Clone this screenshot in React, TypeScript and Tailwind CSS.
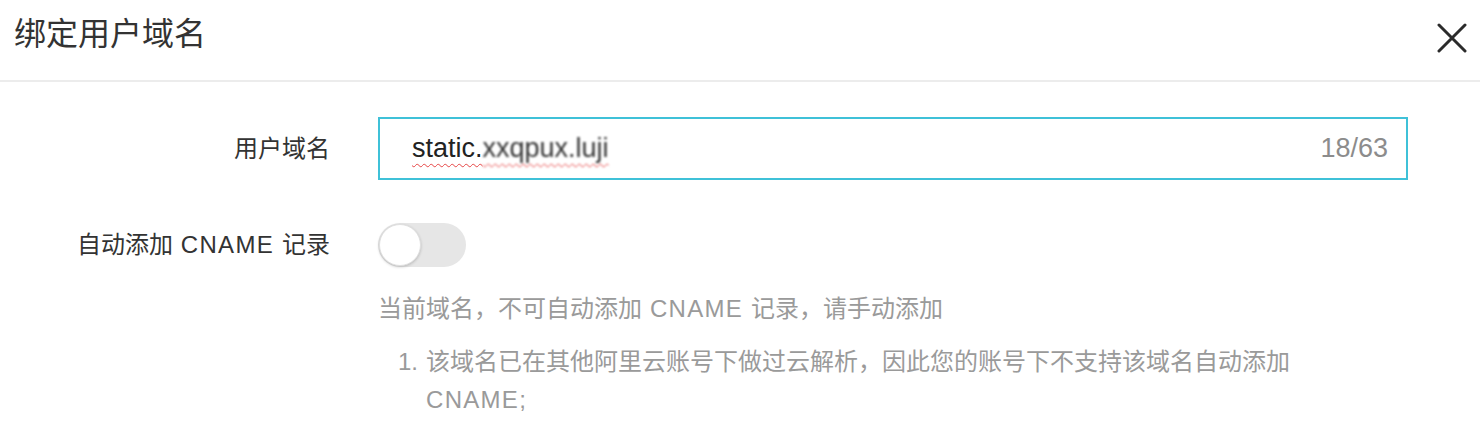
import React from "react";

const font = { fontFamily: '"Liberation Sans", "Noto Sans CJK SC", sans-serif' };

const App = () => {
  return (
    <div className="w-[1480px] h-[421px] bg-white overflow-hidden text-[#333]" style={font}>
      {/* header */}
      <div className="h-[82px] border-b-2 border-[#ececec] flex items-center justify-between pl-[14px] pr-[12px]">
        <div className="text-[32px] leading-none -mt-[12px]">绑定用户域名</div>
        <button className="w-[32px] h-[32px] flex items-center justify-center -mt-[4px]">
          <svg width="30" height="30" viewBox="0 0 30 30">
            <path d="M2 2 L28 28 M28 2 L2 28" stroke="#2b2b2b" strokeWidth="3" strokeLinecap="round" />
          </svg>
        </button>
      </div>

      {/* form */}
      <div className="grid grid-cols-[330px_1030px] gap-x-[48px] pt-[35px]">
        <div className="h-[63px] flex items-center justify-end text-[24px]">用户域名</div>
        <div className="h-[63px] border-2 border-[#3fc1d8] flex items-center justify-between pl-[32px] pr-[18px]">
          <span className="text-[27px] text-[#222] underline decoration-wavy decoration-[#e64545] decoration-[1px] underline-offset-[6px]">
            static.<span className="blur-[1px] text-[#333]">xxqpux.luji</span>
          </span>
          <span className="text-[27px] text-[#8c8c8c]">18/63</span>
        </div>

        <div className="h-[44px] mt-[43px] flex items-center justify-end text-[24px]">
          <span>
            自动添加<span className="tracking-[1.3px]"> CNAME </span>记录
          </span>
        </div>
        <div className="mt-[43px]">
          <div className="w-[88px] h-[44px] rounded-full bg-[#e6e6e6] p-[1px]">
            <div className="w-[42px] h-[42px] rounded-full bg-white border border-[#e0e0e0] shadow-[0_1px_3px_rgba(0,0,0,0.2)]" />
          </div>
          <div className="mt-[26px] text-[24px] text-[#9a9a9a] leading-[32px]">
            当前域名，不可自动添加<span className="tracking-[1.3px]"> CNAME </span>记录，请手动添加
          </div>
          <div className="mt-[18px] flex text-[24px] text-[#9a9a9a] leading-[38px]">
            <span className="w-[48px] pl-[20px] shrink-0">1.</span>
            <span className="w-[900px]">
              该域名已在其他阿里云账号下做过云解析，因此您的账号下不支持该域名自动添加
              <br />
              <span className="tracking-[1.3px]">CNAME</span>;
            </span>
          </div>
        </div>
      </div>
    </div>
  );
};

export default App;
